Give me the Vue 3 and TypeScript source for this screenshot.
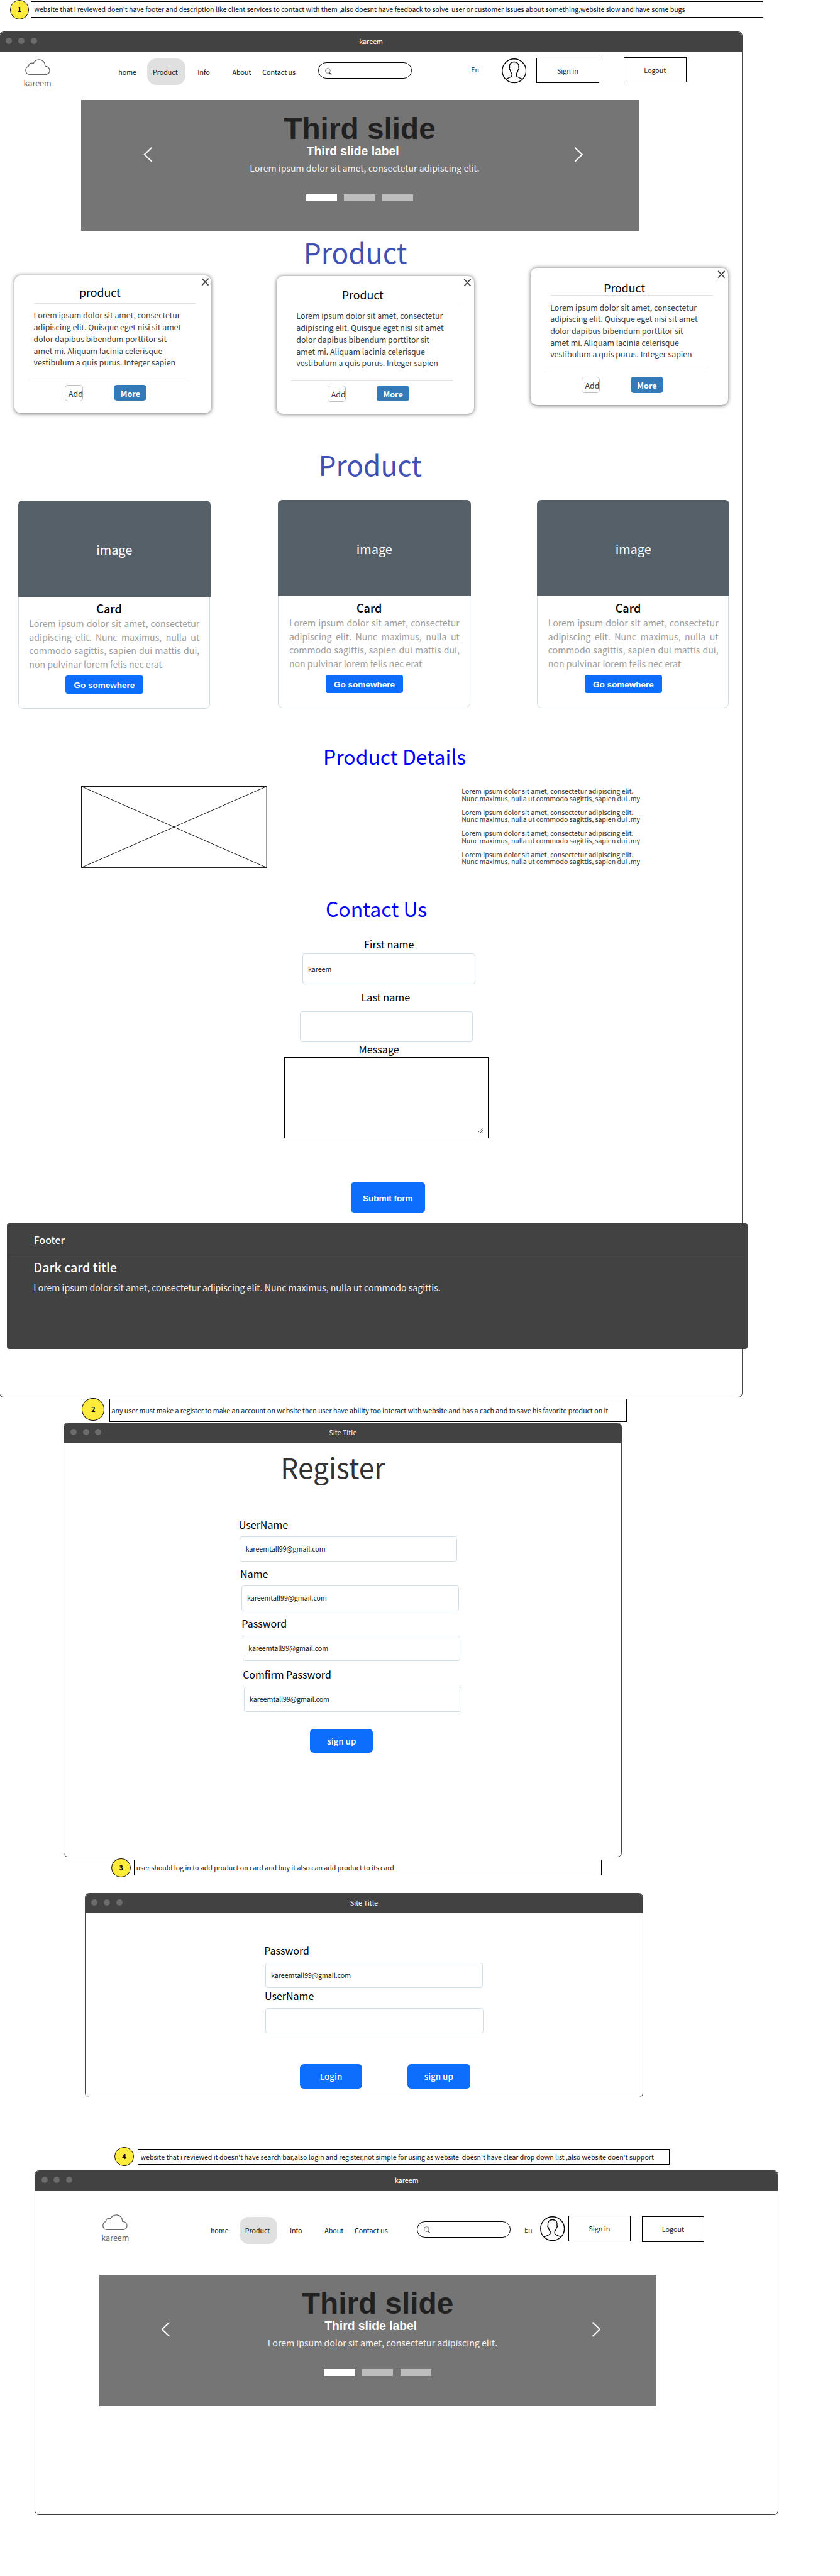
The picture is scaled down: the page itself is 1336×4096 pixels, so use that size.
<script setup lang="ts">
interface ProductCard { title: string; variant: string }
interface Field { label: string; value: string; variant: string }

const productCards: ProductCard[] = [
  { title: 'product', variant: 'first' },
  { title: 'Product', variant: 'second' },
  { title: 'Product', variant: 'third' },
]

const productText = [
  'Lorem ipsum dolor sit amet, consectetur',
  'adipiscing elit. Quisque eget nisi sit amet',
  'dolor dapibus bibendum porttitor sit',
  'amet mi. Aliquam lacinia celerisque',
  'vestibulum a quis purus. Integer sapien',
].join('\n')

const imageCards: string[] = ['first', 'second', 'third']

const detail = 'Lorem ipsum dolor sit amet, consectetur adipiscing elit.\nNunc maximus, nulla ut commodo sagittis, sapien dui .my'

const registerFields: Field[] = [
  { label: 'UserName', value: 'kareemtall99@gmail.com', variant: 'reg-user' },
  { label: 'Name', value: 'kareemtall99@gmail.com', variant: 'reg-name' },
  { label: 'Password', value: 'kareemtall99@gmail.com', variant: 'reg-pass' },
  { label: 'Comfirm Password', value: 'kareemtall99@gmail.com', variant: 'reg-confirm' },
]

const loginFields: Field[] = [
  { label: 'Password', value: 'kareemtall99@gmail.com', variant: 'log-pass' },
  { label: 'UserName', value: '', variant: 'log-user' },
]

const notes = {
  one: "website that i reviewed doen't have footer and description like client services to contact with them ,also doesnt have feedback to solve  user or customer issues about something,website slow and have some bugs",
  two: 'any user must make a register to make an account on website then user have ability too interact with website and has a cach and to save his favorite product on it',
  three: 'user should log in to add product on card and buy it also can add product to its card',
  four: "website that i reviewed it doesn't have search bar,also login and register,not simple for using as website  doesn't have clear drop down list ,also website doen't support",
}
</script>

<template>
  <div class="board">
    <svg class="symbols" aria-hidden="true">
      <symbol id="i-cloud" viewBox="0 0 40.5 25.6">
        <path d="M7.3 24.8C3.4 24.8.8 22 .8 18.2C.8 14.8 2.8 12.3 5.6 11.3C5.6 7.2 9.4 5 13.2 6.9C15.2 2.6 18.8.8 22.4.8C28.3.8 32.5 5.4 32.2 11.2C36.8 11.4 39.7 14.5 39.7 18.1C39.7 22 36.9 24.8 33 24.8Z" fill="none" stroke="#666" stroke-width="1.3" />
      </symbol>
      <symbol id="i-search" viewBox="0 0 11 11.5">
        <circle cx="4.5" cy="4.6" r="4" fill="none" stroke="#444" stroke-width=".7" />
        <path d="M7.2 7.8L10.2 11" fill="none" stroke="#111" stroke-width="1.3" />
      </symbol>
      <symbol id="i-avatar" viewBox="0 0 40 40">
        <circle cx="20" cy="20" r="19.2" fill="none" stroke="#000" stroke-width="1.4" />
        <path d="M6.9 33.4C9 31.3 16.4 30.4 16.4 27.5V24.3C14.4 22.6 13.9 21 13.6 18.6C12.3 17.6 12 15.6 12.7 14.4C12 8.4 15 5.6 20 5.6C25 5.6 28 8.4 27.3 14.4C28 15.6 27.7 17.6 26.4 18.6C26.1 21 25.6 22.6 23.6 24.3V27.5C23.6 30.4 31 31.3 33.1 33.4" fill="none" stroke="#000" stroke-width="1.4" />
      </symbol>
    </svg>

    <div class="note note-1">
      <span class="badge">1</span>
      <p class="note-box">{{ notes.one }}</p>
    </div>

    <section class="window window-home">
      <header class="titlebar">
        <span class="dots"><i></i><i></i><i></i></span>
        <span class="title">kareem</span>
      </header>

      <div class="topbar topbar-home">
        <div class="logo">
          <svg class="cloud"><use href="#i-cloud" /></svg>
          <span>kareem</span>
        </div>
        <nav class="menu">
          <a>home</a><a class="active">Product</a><a>Info</a><a>About</a><a>Contact us</a>
        </nav>
        <div class="search"><svg><use href="#i-search" /></svg></div>
        <span class="lang">En</span>
        <svg class="avatar"><use href="#i-avatar" /></svg>
        <button class="outline sign-in">Sign in</button>
        <button class="outline logout">Logout</button>
      </div>

      <div class="carousel">
        <h1>Third slide</h1>
        <h2>Third slide label</h2>
        <p>Lorem ipsum dolor sit amet, consectetur adipiscing elit.</p>
        <div class="indicators"><i class="on"></i><i></i><i></i></div>
        <svg class="arrow prev" viewBox="0 0 15 24"><path d="M13.5 .8L1.8 12L13.5 23.2" /></svg>
        <svg class="arrow next" viewBox="0 0 15 24"><path d="M1.5 .8L13.2 12L1.5 23.2" /></svg>
      </div>

      <h2 class="heading products-heading">Product</h2>
      <div class="product-row">
        <article v-for="c in productCards" :key="c.variant" class="product-card" :class="c.variant">
          <svg class="close" viewBox="0 0 13 13"><path d="M1 .8L12 12.2M12 .8L1 12.2" /></svg>
          <h3>{{ c.title }}</h3>
          <hr />
          <p>{{ productText }}</p>
          <hr class="lower" />
          <div class="actions">
            <button class="add">Add</button>
            <button class="more">More</button>
          </div>
        </article>
      </div>

      <h2 class="heading cards-heading">Product</h2>
      <div class="image-row">
        <article v-for="v in imageCards" :key="v" class="image-card" :class="v">
          <div class="placeholder">image</div>
          <h3>Card</h3>
          <p>Lorem ipsum dolor sit amet, consectetur adipiscing elit. Nunc maximus, nulla ut commodo sagittis, sapien dui mattis dui, non pulvinar lorem felis nec erat</p>
          <button>Go somewhere</button>
        </article>
      </div>

      <h2 class="blue-heading details-heading">Product Details</h2>
      <div class="details">
        <svg class="crossbox" viewBox="0 0 300 132">
          <path d="M.5 .5H299.5V131.5H.5ZM.5 .5L299.5 131.5M299.5 .5L.5 131.5" />
        </svg>
        <div class="paragraphs">
          <p v-for="n in 4" :key="n">{{ detail }}</p>
        </div>
      </div>

      <h2 class="blue-heading contact-heading">Contact Us</h2>
      <form class="contact">
        <label class="first-label">First name</label>
        <div class="input first-input">kareem</div>
        <label class="last-label">Last name</label>
        <div class="input last-input"></div>
        <label class="message-label">Message</label>
        <div class="textarea">
          <svg viewBox="0 0 10 9"><path d="M.5 8.7L9.2 .3M4.6 8.7L9.2 4.3M8.2 8.7L9.4 7.6" /></svg>
        </div>
        <button type="button" class="submit">Submit form</button>
      </form>

      <footer class="footer">
        <h4>Footer</h4>
        <hr />
        <h3>Dark card title</h3>
        <p>Lorem ipsum dolor sit amet, consectetur adipiscing elit. Nunc maximus, nulla ut commodo sagittis.</p>
      </footer>
    </section>

    <div class="note note-2">
      <span class="badge">2</span>
      <p class="note-box">{{ notes.two }}</p>
    </div>

    <section class="window window-register">
      <header class="titlebar">
        <span class="dots"><i></i><i></i><i></i></span>
        <span class="title">Site Title</span>
      </header>
      <h2 class="register-title">Register</h2>
      <div v-for="f in registerFields" :key="f.variant" class="field" :class="f.variant">
        <label>{{ f.label }}</label>
        <div class="input">{{ f.value }}</div>
      </div>
      <button class="primary register-submit">sign up</button>
    </section>

    <div class="note note-3">
      <span class="badge">3</span>
      <p class="note-box">{{ notes.three }}</p>
    </div>

    <section class="window window-login">
      <header class="titlebar">
        <span class="dots"><i></i><i></i><i></i></span>
        <span class="title">Site Title</span>
      </header>
      <div v-for="f in loginFields" :key="f.variant" class="field" :class="f.variant">
        <label>{{ f.label }}</label>
        <div class="input">{{ f.value }}</div>
      </div>
      <div class="login-actions">
        <button class="primary">Login</button>
        <button class="primary">sign up</button>
      </div>
    </section>

    <div class="note note-4">
      <span class="badge">4</span>
      <p class="note-box">{{ notes.four }}</p>
    </div>

    <section class="window window-review">
      <header class="titlebar">
        <span class="dots"><i></i><i></i><i></i></span>
        <span class="title">kareem</span>
      </header>
      <div class="topbar topbar-review">
        <div class="logo">
          <svg class="cloud"><use href="#i-cloud" /></svg>
          <span>kareem</span>
        </div>
        <nav class="menu">
          <a>home</a><a class="active">Product</a><a>Info</a><a>About</a><a>Contact us</a>
        </nav>
        <div class="search"><svg><use href="#i-search" /></svg></div>
        <span class="lang">En</span>
        <svg class="avatar"><use href="#i-avatar" /></svg>
        <button class="outline sign-in">Sign in</button>
        <button class="outline logout">Logout</button>
      </div>
      <div class="carousel review-carousel">
        <h1>Third slide</h1>
        <h2>Third slide label</h2>
        <p>Lorem ipsum dolor sit amet, consectetur adipiscing elit.</p>
        <div class="indicators"><i class="on"></i><i></i><i></i></div>
        <svg class="arrow prev" viewBox="0 0 15 24"><path d="M13.5 .8L1.8 12L13.5 23.2" /></svg>
        <svg class="arrow next" viewBox="0 0 15 24"><path d="M1.5 .8L13.2 12L1.5 23.2" /></svg>
      </div>
    </section>
  </div>
</template>

<style>
html, body { margin: 0; background: #fff; }
</style>

<style scoped>
.board {
  zoom: 0.98525;
  width: 1356px;
  height: 4157px;
  overflow: hidden;
  display: flex;
  flex-direction: column;
  align-items: flex-start;
  background: #fff;
  color: #000;
  font-family: "Noto Sans CJK SC", "Noto Sans", sans-serif;
  font-size: 10.75px;
}
.board * { box-sizing: border-box; }
.symbols { position: absolute; width: 0; height: 0; }
h1, h2, h3, h4, p { margin: 0; font-weight: 400; white-space: nowrap; }
hr { margin: 0; border: 0; height: 1px; }
label { display: block; }
button { display: block; padding: 0; border: 0; background: none; color: inherit; font: inherit; white-space: nowrap; }

/* annotations */
.note { display: flex; align-items: flex-start; flex: none; }
.badge {
  flex: none;
  width: 31px;
  height: 31px;
  border: 1px solid #111;
  border-radius: 50%;
  background: #ffeb3b;
  font-size: 11px;
  font-weight: 700;
  line-height: 28px;
  text-align: center;
}
.note-box {
  flex: none;
  height: 26px;
  border: 1px solid #000;
  line-height: 25px;
  white-space: pre;
  color: #111;
}
.note-1 { height: 51px; padding-left: 16px; }
.note-1 .note-box { width: 1182px; margin: 2px 0 0 3px; padding-left: 4.3px; }
.note-2 { height: 41px; padding: 1px 0 0 132.3px; }
.note-2 .badge { width: 36.5px; height: 37px; line-height: 33.6px; }
.note-2 .note-box { width: 835.5px; height: 38px; margin: 1px 0 0 7.6px; padding-left: 2.8px; line-height: 36.6px; }
.note-3 { height: 58px; padding: 2px 0 0 180px; }
.note-3 .note-box { width: 755px; margin: 2px 0 0 5px; padding-left: 3.1px; }
.note-4 { height: 38px; margin-top: 80px; padding-left: 185px; }
.note-4 .note-box { width: 859px; margin: 3px 0 0 6px; padding-left: 4px; }

/* browser windows */
.window {
  flex: none;
  display: flex;
  flex-direction: column;
  align-items: flex-start;
  border: 1px solid #424242;
  border-radius: 7px;
}
.window-home { width: 1200px; height: 2204px; margin-left: -1px; }
.window-register { width: 901px; height: 701px; margin-left: 103px; }
.window-login { width: 901.5px; height: 330px; margin-left: 136.8px; }
.window-review { width: 1201px; height: 556px; margin-left: 56px; }
.titlebar {
  flex: none;
  align-self: stretch;
  height: 32px;
  display: grid;
  grid-template-columns: 1fr auto 1fr;
  background: #424242;
  border-radius: 6px 6px 0 0;
  color: #fff;
  font-size: 10.95px;
  line-height: 28.6px;
}
.dots { display: flex; gap: 9.8px; padding: 8.8px 0 0 9.5px; }
.dots i { width: 10.2px; height: 10.2px; border-radius: 50%; background: #6b6b6b; }

/* site header */
.topbar { flex: none; display: flex; align-items: flex-start; }
.topbar > * { flex: none; }
.topbar-home { height: 77px; }
.topbar-review { height: 135px; padding-top: 32px; }
.logo { width: 45px; display: flex; flex-direction: column; align-items: center; gap: 3.4px; margin: 11.7px 0 0 38px; color: #666; font-size: 12.75px; line-height: 18px; }
.cloud { width: 40.5px; height: 25.6px; }
.menu { display: grid; grid-template-columns: 47px 81px 56px 48.5px 55px; width: 287.5px; height: 43px; margin: 10px 0 0 108px; font-size: 10.87px; line-height: 43.8px; white-space: nowrap; color: #111; }
.menu .active { width: 61px; height: 43px; padding-left: 8.6px; border-radius: 15px; background: #e0e0e0; }
.search { width: 151px; height: 26px; margin: 17px 0 0 35.5px; padding: 7.5px 0 0 10px; border: 1px solid #000; border-radius: 13px; line-height: 0; }
.search svg { width: 11px; height: 11.5px; }
.lang { width: 16px; margin: 20.8px 0 0 95.4px; line-height: 16px; color: #333; }
.avatar { width: 40px; height: 40px; margin: 10.8px 0 0 33.6px; }
.outline { width: 101px; height: 41px; border: 1px solid #000; background: #fff; font-size: 10.95px; line-height: 39.4px; text-align: center; color: #222; }
.sign-in { margin: 9px 0 0 16px; }
.logout { margin: 8px 0 0 40px; }
.topbar-review .logo { margin: 5.7px 0 0 106.6px; }
.topbar-review .menu { margin-left: 131.3px; }
.topbar-review .search { margin-left: 46px; }
.topbar-review .lang { margin: 22.8px 0 0 22px; }
.topbar-review .avatar { margin: 8.5px 0 0 10px; }
.topbar-review .sign-in { margin: 8px 0 0 4.7px; }
.topbar-review .logout { margin: 9px 0 0 18px; }

/* carousel */
.carousel { position: relative; flex: none; display: flex; flex-direction: column; align-items: flex-start; width: 900px; height: 212px; margin-left: 131px; background: #757575; color: #fff; }
.review-carousel { margin-left: 103px; }
.carousel h1 { margin: 22.7px 0 0 327px; font: 700 48.5px/48px "Liberation Sans", sans-serif; color: #212121; }
.carousel h2 { margin: .3px 0 0 364px; font: 700 19.6px/24px "Liberation Sans", sans-serif; }
.carousel p { height: 18.6px; margin: 5.7px 0 0 272.2px; overflow: hidden; font-size: 14.37px; line-height: 20px; color: #f2f2f2; }
.indicators { display: flex; gap: 11.6px; margin: 33.7px 0 0 363px; }
.indicators i { width: 50px; height: 11px; background: #bdbdbd; }
.indicators .on { background: #fff; }
.arrow { position: absolute; top: 76.5px; width: 15px; height: 24px; fill: none; stroke: #fff; stroke-width: 2; }
.prev { left: 100px; }
.next { left: 795.5px; }

/* modal style product cards */
.heading { color: #3f51b5; font-size: 44.95px; line-height: 52px; }
.products-heading { margin: 7.2px 0 -.8px 490px; }
.product-row { flex: none; display: flex; align-items: flex-start; height: 236.6px; padding: .6px 0 0 23px; }
.product-card { position: relative; width: 318.3px; height: 222px; border-radius: 10px; background: #fff; box-shadow: 0 1px 6px rgba(0, 0, 0, .55); }
.product-card.first { margin-top: 13px; }
.product-card.second { margin: 14px 0 0 105.7px; }
.product-card.third { margin-left: 91.6px; }
.close { position: absolute; top: 4px; right: 4px; width: 13px; height: 12.5px; fill: none; stroke: #424242; stroke-width: 1.9; }
.product-card h3 { height: 44px; font-size: 18px; line-height: 24px; }
.product-card.first h3 { padding: 14.5px 0 0 104.9px; }
.product-card.second h3 { padding: 18.1px 0 0 105px; }
.product-card.third h3 { height: 45px; margin-bottom: -1px; padding: 20.8px 0 0 117.7px; }
.product-card hr { width: 261px; margin-left: 32px; background: #e0e0e0; }
.product-card p { margin: 9.8px 0 0 31.4px; font-size: 12.57px; line-height: 19px; color: #3a3a3a; white-space: pre; }
.product-card .lower { margin: 18.2px 0 0 23px; }
.actions { display: flex; gap: 50px; padding: 7px 0 0 82px; font-size: 12.57px; }
.add { width: 29px; height: 26.6px; padding-left: 4.6px; border: 1px solid #bdbdbd; border-radius: 5px; line-height: 26.8px; text-align: left; color: #333; }
.more { width: 53px; height: 26px; border-radius: 5px; background: #337ab7; color: #fff; font-size: 12.8px; font-weight: 700; line-height: 27.8px; }

/* image cards */
.cards-heading { margin: 55.6px 0 -.8px 514px; }
.image-row { flex: none; display: flex; align-items: flex-start; height: 337px; margin-top: 32.6px; padding-left: 29px; }
.image-card { width: 310px; height: 336px; border: 1px solid #cfdde6; border-radius: 8px; }
.image-card.first { margin-top: 1px; }
.image-card.second { margin-left: 109.8px; }
.image-card.third { margin-left: 108px; }
.placeholder { height: 155px; margin: -1px -2px 0 -1px; border-radius: 7px 7px 0 0; background: #566068; color: #fff; font-size: 20.2px; line-height: 159px; text-align: center; }
.image-card h3 { margin-top: 7.2px; padding-left: 125.6px; font-size: 18.3px; font-weight: 500; line-height: 24px; }
.image-card p { width: 275px; margin: 1px 0 0 17px; font-size: 14.35px; line-height: 22px; white-space: normal; text-align: justify; color: #9e9e9e; }
.image-card button { width: 125.2px; height: 30px; margin: 6.3px 0 0 75.8px; border-radius: 4px; background: #0d6efd; color: #fff; font: 700 13.74px/33.4px "Liberation Sans", sans-serif; }

/* details */
.blue-heading { color: #0000ff; font-size: 32.4px; line-height: 44px; }
.details-heading { margin: 54px 0 -.6px 521.8px; }
.details { flex: none; display: flex; align-items: flex-start; height: 132px; margin: 27.2px 0 0 131.2px; }
.crossbox { flex: none; width: 300px; height: 132px; fill: none; stroke: #111; stroke-width: 1; }
.paragraphs { display: flex; flex-direction: column; gap: 10.1px; margin: 2px 0 0 314px; color: #333; line-height: 11.95px; }
.paragraphs p { white-space: pre; }

/* contact form */
.contact-heading { margin: 42.9px 0 -.6px 525.7px; }
.contact { flex: none; height: 470.1px; padding-top: 24.8px; font-size: 16.45px; line-height: 24px; }
.first-label { margin-left: 587.7px; }
.last-label { margin: 9.1px 0 0 583.1px; }
.message-label { margin: 1.8px 0 0 579.1px; line-height: 20px; }
.input { border: 1px solid #d3dee6; border-radius: 4px; background: #fff; font-size: 10.8px; color: #111; }
.first-input { width: 279px; height: 50.4px; margin: 2.5px 0 0 488px; padding-left: 8.3px; line-height: 47.8px; }
.last-input { width: 279px; height: 50.4px; margin: 9.8px 0 0 484px; }
.textarea { display: flex; justify-content: flex-end; align-items: flex-end; width: 330px; height: 131px; margin: 2.4px 0 0 459px; padding: 0 8px 8px 0; border: 1px solid #000; }
.textarea svg { width: 10px; height: 9px; fill: none; stroke: #222; stroke-width: .9; }
.submit { width: 120px; height: 49px; margin: 71px 0 0 566px; border-radius: 5px; background: #0d6efd; color: #fff; font: 700 13.68px/52px "Liberation Sans", sans-serif; }

.footer { flex: none; width: 1195.3px; height: 203px; margin: 17px 0 0 11.2px; padding-top: 14.7px; border-radius: 4px; background: #424242; color: #fff; }
.footer h4 { margin-left: 43.4px; font-size: 16.03px; font-weight: 500; line-height: 24px; }
.footer hr { margin: 9.3px 4.5px 0 3.5px; background: #757575; }
.footer h3 { margin: 7.8px 0 0 43.2px; font-size: 19.85px; font-weight: 500; line-height: 28px; }
.footer p { margin: 9.9px 0 0 42.8px; font-size: 14.34px; line-height: 20px; color: #f2f2f2; }

/* register and login */
.register-title { margin: 8.9px 0 50px 349px; color: #333; font-size: 44.92px; line-height: 60px; }
.field { flex: none; padding-top: .8px; }
.field label { margin-left: -1.5px; font-size: 16.25px; line-height: 24px; }
.field .input { width: 351.4px; height: 40.8px; margin-top: 7.1px; padding-left: 8.5px; line-height: 37.8px; }
.reg-user { margin-left: 283px; }
.reg-name { margin: 6.8px 0 0 285.3px; }
.reg-pass { margin: 8.2px 0 0 287.6px; }
.reg-confirm { margin: 9.5px 0 0 289.4px; }
.primary { width: 101.3px; height: 39.3px; border-radius: 6px; background: #0d6efd; color: #fff; font-size: 13.6px; font-weight: 500; line-height: 39.8px; }
.register-submit { margin: 26.8px 0 0 396.8px; }
.log-pass { margin: 47.9px 0 0 290.2px; }
.log-user { margin: .4px 0 0 291px; }
.login-actions { display: flex; gap: 72.5px; margin: 49.6px 0 0 346px; }
</style>
